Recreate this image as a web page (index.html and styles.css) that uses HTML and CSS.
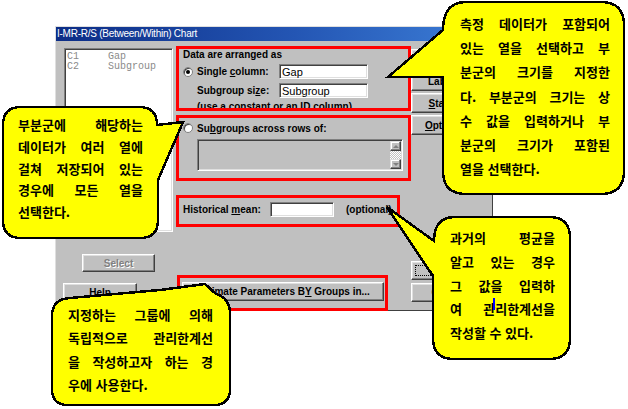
FILE: index.html
```html
<!DOCTYPE html>
<html lang="ko">
<head>
<meta charset="utf-8">
<title>I-MR-R/S (Between/Within) Chart</title>
<link rel="stylesheet" href="styles.css">
</head>
<body>
<div class="dialog">
  <div class="titlebar">I-MR-R/S (Between/Within) Chart</div>
  <div class="dbody">
    <div class="col-left">
      <div class="listbox">
        <div class="li"><span class="cn">C1</span><span>Gap</span></div>
        <div class="li"><span class="cn">C2</span><span>Subgroup</span></div>
      </div>
      <div class="btn btn-select disabled"><span>Select</span></div>
      <div class="btn btn-help"><span>Help</span></div>
    </div>
    <div class="col-mid">
      <div class="grp grp1">
        <div class="gtitle">Data are arranged as</div>
        <div class="row r1">
          <span class="radio on"></span><span class="lbl">Single <u>c</u>olumn:</span><span class="input">Gap</span>
        </div>
        <div class="row r2">
          <span class="lbl">Subgroup si<u>z</u>e:</span><span class="input">Subgroup</span>
        </div>
        <div class="note">(use a constant or an ID column)</div>
      </div>
      <div class="grp grp2">
        <div class="row r-sub"><span class="radio"></span><span class="lbl-sub">Su<u>b</u>groups across rows of:</span></div>
        <div class="rowsbox">
          <div class="sb">
            <div class="sbb"><span class="arr up"></span></div>
            <div class="sbt"></div>
            <div class="sbb"><span class="arr dn"></span></div>
          </div>
        </div>
      </div>
      <div class="grp grp3">
        <div class="row r-hist"><span class="lbl-hist">Historical <u>m</u>ean:</span><span class="input in-hist"></span><span class="opt">(optional)</span></div>
      </div>
      <div class="grp grp4">
        <div class="btn btn-est"><span>Estimate Parameters B<u>Y</u> Groups in...</span></div>
      </div>
    </div>
    <div class="col-right">
      <div class="btn rb rb-first"><span>Scale...</span></div>
      <div class="btn rb"><span>Labels...</span></div>
      <div class="btn rb"><span><u>S</u>tamp...</span></div>
      <div class="btn rb"><span><u>O</u>ptions...</span></div>
      <div class="btn rb rb-ok"><span>OK</span></div>
      <div class="btn rb rb-cancel"><span>Cancel</span></div>
    </div>
  </div>
</div>

<svg class="balloons" width="628" height="409" viewBox="0 0 628 409" shape-rendering="crispEdges">
  <path d="M 466 2 H 601 Q 624 2 624 25 V 171 Q 624 194 601 194 H 466 Q 443 194 443 171 V 77 H 388 L 443 30 Q 443 2 466 2 Z"/>
  <path d="M 21 107 H 139 Q 157 107 157 125 L 183 122 L 158 180 V 220 Q 158 238 140 238 H 21 Q 3 238 3 220 V 125 Q 3 107 21 107 Z"/>
  <path d="M 70 298 L 160 290 L 205 284 L 216 294 Q 230 298 230 314 V 389 Q 230 405 214 405 H 68 Q 52 405 52 389 V 316 Q 52 299 70 298 Z"/>
  <path d="M 455 217 H 549 Q 570 217 570 238 V 338 Q 570 359 549 359 H 454 Q 433 359 433 338 V 276 L 387 207 L 434 241 Q 434 217 455 217 Z"/>
</svg>

<div class="bt bt-a">
  <div class="ln"><span>측정</span><span>데이터가</span><span>포함되어</span></div>
  <div class="ln"><span>있는</span><span>열을</span><span>선택하고</span><span>부</span></div>
  <div class="ln"><span>분군의</span><span>크기를</span><span>지정한</span></div>
  <div class="ln"><span>다.</span><span>부분군의</span><span>크기는</span><span>상</span></div>
  <div class="ln"><span>수</span><span>값을</span><span>입력하거나</span><span>부</span></div>
  <div class="ln"><span>분군의</span><span>크기가</span><span>포함된</span></div>
  <div class="ln end">열을 선택한다.</div>
</div>

<div class="bt bt-b">
  <div class="ln"><span>부분군에</span><span>해당하는</span></div>
  <div class="ln"><span>데이터가</span><span>여러</span><span>열에</span></div>
  <div class="ln"><span>걸쳐</span><span>저장되어</span><span>있는</span></div>
  <div class="ln"><span>경우에</span><span>모든</span><span>열을</span></div>
  <div class="ln end">선택한다.</div>
</div>

<div class="bt bt-c">
  <div class="ln"><span>지정하는</span><span>그룹에</span><span>의해</span></div>
  <div class="ln"><span>독립적으로</span><span>관리한계선</span></div>
  <div class="ln"><span>을</span><span>작성하고자</span><span>하는</span><span>경</span></div>
  <div class="ln end">우에 사용한다.</div>
</div>

<div class="bt bt-d">
  <div class="ln"><span>과거의</span><span>평균을</span></div>
  <div class="ln"><span>알고</span><span>있는</span><span>경우</span></div>
  <div class="ln"><span>그</span><span>값을</span><span>입력하</span></div>
  <div class="ln"><span>여</span><span>관리한계선을</span></div>
  <div class="ln end">작성할 수 있다.</div>
</div>

<div class="caret"></div>
</body>
</html>
```

FILE: styles.css
```css
html, body {
  margin: 0;
  padding: 0;
  background: #ffffff;
}
body {
  width: 628px;
  height: 409px;
  overflow: hidden;
  position: relative;
}

/* ---------- dialog window ---------- */
.dialog {
  box-sizing: border-box;
  width: 438px;
  height: 285px;
  margin: 26px 0 0 55px;
  background: #c0c0c0;
  border: 1px solid;
  border-color: #dfdfdf #404040 #404040 #dfdfdf;
  font: bold 10px "Liberation Sans", Arial, sans-serif;
  color: #000;
}
.titlebar {
  height: 14px;
  line-height: 14px;
  padding-left: 1px;
  color: #fff;
  font-weight: normal;
  font-size: 10px;
  letter-spacing: -0.25px;
  white-space: nowrap;
  background: linear-gradient(90deg, #0c2d86 0%, #2456b4 55%, #3d7fd8 100%);
}
.dbody {
  display: flex;
  align-items: flex-start;
  height: 269px;
  padding: 0 7px 0 8px;
}

/* generic win32 controls */
.btn {
  box-sizing: border-box;
  display: flex;
  align-items: center;
  justify-content: center;
  background: #c0c0c0;
  border: 1px solid;
  border-color: #ffffff #404040 #404040 #ffffff;
  box-shadow: inset -1px -1px #808080, inset 1px 1px #dfdfdf;
  white-space: nowrap;
}
.btn.disabled {
  color: #808080;
  text-shadow: 1px 1px #ffffff;
}
.input {
  box-sizing: border-box;
  display: flex;
  align-items: center;
  height: 15px;
  width: 89px;
  padding-left: 2px;
  background: #ffffff;
  border: 1px solid;
  border-color: #808080 #ffffff #ffffff #808080;
  box-shadow: inset 1px 1px #404040, inset -1px -1px #dfdfdf;
  font: normal 11px "Liberation Sans", Arial, sans-serif;
  color: #000;
}
.radio {
  box-sizing: border-box;
  flex: none;
  width: 10px;
  height: 10px;
  margin-right: 4px;
  border-radius: 50%;
  background: #ffffff;
  border: 1px solid #808080;
  box-shadow: inset 1px 1px #404040;
  position: relative;
}
.radio.on::after {
  content: "";
  position: absolute;
  left: 2px;
  top: 2px;
  width: 4px;
  height: 4px;
  border-radius: 50%;
  background: #000;
}

/* ---------- left column ---------- */
.col-left {
  width: 109px;
  flex: none;
  display: flex;
  flex-direction: column;
}
.listbox {
  box-sizing: border-box;
  margin-top: 7px;
  height: 184px;
  background: #ffffff;
  border: 1px solid;
  border-color: #808080 #ffffff #ffffff #808080;
  box-shadow: inset 1px 1px #404040, inset -1px -1px #dfdfdf;
  padding: 3px 0 0 2px;
  font: normal 10px "Liberation Mono", "Courier New", monospace;
  line-height: 9.5px;
  color: #8a8a8a;
}
.li {
  display: flex;
  white-space: nowrap;
}
.cn {
  width: 41px;
}
.btn-select {
  margin: 22px 0 0 18px;
  width: 73px;
  height: 18px;
}
.btn-help {
  margin: 11px 0 0 -1px;
  width: 74px;
  height: 19px;
  align-items: flex-start;
  padding-top: 3px;
}

/* ---------- middle column ---------- */
.col-mid {
  width: 235px;
  flex: none;
  margin-left: 3px;
  display: flex;
  flex-direction: column;
  align-items: flex-start;
}
.grp {
  box-sizing: border-box;
  border: 3px solid #ff0000;
  overflow: hidden;
}
.grp1 {
  margin-top: 5px;
  width: 235px;
  height: 65px;
}
.gtitle {
  height: 12px;
  line-height: 12px;
  padding-left: 4px;
  white-space: nowrap;
}
.row {
  display: flex;
  align-items: center;
  height: 15px;
  padding-left: 4px;
  white-space: nowrap;
}
.r1 {
  margin-top: 3px;
}
.r2 {
  margin-top: 4px;
  padding-left: 18px;
}
.lbl {
  width: 82px;
  flex: none;
}
.note {
  margin-top: 3px;
  padding-left: 18px;
  height: 12px;
  line-height: 12px;
  white-space: nowrap;
}

.grp2 {
  margin-top: 4px;
  width: 235px;
  height: 66px;
}
.r-sub {
  height: 12px;
  margin-top: 4px;
}
.rowsbox {
  box-sizing: border-box;
  margin: 5px 0 0 18px;
  width: 206px;
  height: 32px;
  border: 1px solid;
  border-color: #808080 #ffffff #ffffff #808080;
  box-shadow: inset 1px 1px #404040, inset -1px -1px #dfdfdf;
  background: #c0c0c0;
  display: flex;
  justify-content: flex-end;
  padding: 1px;
}
.sb {
  width: 11px;
  display: flex;
  flex-direction: column;
}
.sbb {
  box-sizing: border-box;
  height: 10px;
  background: #c0c0c0;
  border: 1px solid;
  border-color: #dfdfdf #404040 #404040 #dfdfdf;
  box-shadow: inset -1px -1px #808080, inset 1px 1px #ffffff;
  display: flex;
  align-items: center;
  justify-content: center;
}
.sbt {
  flex: 1;
  background: repeating-conic-gradient(#ffffff 0 25%, #c0c0c0 0 50%) 0 0 / 2px 2px;
}
.arr {
  width: 0;
  height: 0;
  border-left: 3px solid transparent;
  border-right: 3px solid transparent;
}
.arr.up {
  border-bottom: 3px solid #808080;
}
.arr.dn {
  border-top: 3px solid #808080;
}

.grp3 {
  margin-top: 14px;
  width: 224px;
  height: 32px;
}
.r-hist {
  margin-top: 4px;
}
.lbl-hist {
  width: 87px;
  flex: none;
}
.in-hist {
  width: 64px;
}
.opt {
  margin-left: 12px;
}

.grp4 {
  margin: 48px 0 0 1px;
  width: 211px;
  height: 36px;
  overflow: visible;
}
.btn-est {
  margin: 4px 0 0 2px;
  width: 202px;
  height: 19px;
}

/* ---------- right column ---------- */
.col-right {
  width: 74px;
  flex: none;
  display: flex;
  flex-direction: column;
}
.rb {
  height: 20px;
  margin-top: 2px;
}
.rb-first {
  margin-top: 8px;
}
.rb-ok {
  margin-top: 126px;
  height: 19px;
  position: relative;
}
.rb-ok::after {
  content: "";
  position: absolute;
  left: 3px;
  top: 3px;
  right: 3px;
  bottom: 3px;
  border: 1px dotted #000;
}
.rb-cancel {
  margin-top: 3px;
  height: 19px;
}

/* ---------- callout balloons (overlay) ---------- */
.balloons {
  position: absolute;
  left: 0;
  top: 0;
  pointer-events: none;
}
.balloons path {
  fill: #ffff00;
  stroke: #000000;
  stroke-width: 2.5;
  stroke-linejoin: miter;
}
.bt {
  position: absolute;
  font: 700 13px "Noto Sans CJK KR", "Noto Sans", sans-serif;
  color: #000;
  word-break: keep-all;
}
.ln {
  display: flex;
  justify-content: space-between;
  white-space: nowrap;
}
.ln.end {
  display: block;
}
.bt-a {
  left: 460px;
  top: 12px;
  width: 150px;
  line-height: 24.2px;
}
.bt-b {
  left: 18px;
  top: 114px;
  width: 125px;
  line-height: 21.8px;
}
.bt-c {
  left: 68px;
  top: 303px;
  width: 145px;
  line-height: 23.3px;
}
.bt-d {
  left: 450px;
  top: 226px;
  width: 105px;
  line-height: 23.8px;
}
.caret {
  position: absolute;
  left: 493px;
  top: 298px;
  width: 2px;
  height: 12px;
  background: #0000ff;
}
```
